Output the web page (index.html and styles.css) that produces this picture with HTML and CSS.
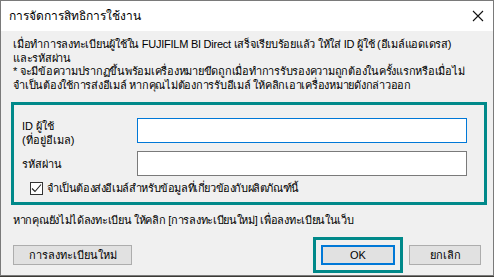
FILE: index.html
```html
<!DOCTYPE html>
<html lang="th">
<head>
<meta charset="utf-8">
<link rel="stylesheet" href="styles.css">
</head>
<body>
<div class="window">
  <div class="titlebar">
    <span class="title">การจัดการสิทธิการใช้งาน</span>
    <svg class="close" width="12" height="12" viewBox="0 0 12 12"><path d="M1 1L11 11M11 1L1 11" stroke="#111" stroke-width="1.1" fill="none"/></svg>
  </div>
  <div class="content">
    <p class="intro">เมื่อทำการลงทะเบียนผู้ใช้ใน FUJIFILM BI Direct เสร็จเรียบร้อยแล้ว ให้ใส่ ID ผู้ใช้ (อีเมล์แอดเดรส)<br>และรหัสผ่าน<br>* จะมีข้อความปรากฏขึ้นพร้อมเครื่องหมายขีดถูกเมื่อทำการรับรองความถูกต้องในครั้งแรกหรือเมื่อไม่<br>จำเป็นต้องใช้การส่งอีเมล์ หากคุณไม่ต้องการรับอีเมล์ ให้คลิกเอาเครื่องหมายดังกล่าวออก</p>
    <div class="group">
      <div class="row">
        <div class="label two">ID ผู้ใช้<br>(ที่อยู่อีเมล)</div>
        <div class="input focused"></div>
      </div>
      <div class="row">
        <div class="label">รหัสผ่าน</div>
        <div class="input"></div>
      </div>
      <div class="check">
        <span class="box"><svg width="11" height="11" viewBox="0 0 11 11"><path d="M1 5.5L4 8.5L10 1.5" stroke="#222" stroke-width="1.1" fill="none"/></svg></span>
        <span class="check-label">จำเป็นต้องส่งอีเมล์สำหรับข้อมูลที่เกี่ยวข้องกับผลิตภัณฑ์นี้</span>
      </div>
    </div>
    <p class="note">หากคุณยังไม่ได้ลงทะเบียน ให้คลิก [การลงทะเบียนใหม่] เพื่อลงทะเบียนในเว็บ</p>
    <div class="buttons">
      <div class="btn wide">การลงทะเบียนใหม่</div>
      <div class="spacer"></div>
      <div class="ring"><div class="btn ok">OK</div></div>
      <div class="btn cancel">ยกเลิก</div>
    </div>
  </div>
</div>
</body>
</html>
```
FILE: styles.css
```css
* {
  box-sizing: border-box;
}
html, body {
  margin: 0;
  padding: 0;
  background: #3b3a36;
}
body {
  width: 494px;
  height: 277px;
  overflow: hidden;
  font-family: "Liberation Sans", sans-serif;
  font-size: 11px;
  line-height: 13px;
  color: #000;
}
.window {
  width: 494px;
  height: 276px;
  border: 1px solid #7a7a7a;
  background: #f0f0f0;
  display: flex;
  flex-direction: column;
  overflow: hidden;
}
.titlebar {
  height: 30px;
  background: #fff;
  display: flex;
  align-items: center;
  padding: 0 9px 0 8px;
  flex: none;
}
.title {
  flex: 1;
  font-size: 12px;
}
.close {
  flex: none;
}
.content {
  flex: 1;
  display: flex;
  flex-direction: column;
  padding: 7px 6px 0 10px;
}
.intro {
  margin: 0 0 0 2px;
  line-height: 13.5px;
  letter-spacing: -0.25px;
  white-space: nowrap;
}
.group {
  flex: none;
  margin-top: 10px;
  height: 103px;
  border: 3px solid #00898a;
  display: flex;
  flex-direction: column;
  padding: 13px 17px 0 8px;
}
.row {
  display: flex;
  align-items: center;
  height: 25px;
  margin-bottom: 8px;
}
.label {
  width: 115px;
  flex: none;
  line-height: 14px;
}
.label.two {
  margin-top: 5px;
}
.input {
  flex: 1;
  height: 25px;
  background: #fff;
  border: 1px solid #7a7a7a;
}
.input.focused {
  border-color: #0078d7;
}
.check {
  display: flex;
  align-items: center;
  gap: 4px;
  padding-left: 8px;
  margin-top: -3px;
  height: 14px;
}
.check-label {
  letter-spacing: -0.4px;
}
.box {
  width: 13px;
  height: 13px;
  border: 1px solid #333;
  background: #fff;
  display: flex;
  align-items: center;
  justify-content: center;
}
.note {
  margin: 9px 0 0 2px;
  height: 13px;
  letter-spacing: -0.3px;
  white-space: nowrap;
}
.buttons {
  flex: none;
  margin: 10px 6px 0 0;
  display: flex;
  align-items: center;
  gap: 6px;
}
.spacer {
  flex: 1;
}
.btn {
  height: 20px;
  background: #e1e1e1;
  border: 1px solid #adadad;
  display: flex;
  align-items: center;
  justify-content: center;
}
.wide {
  width: 119px;
  margin-left: 2px;
}
.ring {
  border: 3px solid #00898a;
  padding: 5px;
  width: 90px;
  height: 36px;
}
.ok {
  width: 74px;
  height: 20px;
  border: 2px solid #0078d7;
}
.cancel {
  width: 72px;
}
```
